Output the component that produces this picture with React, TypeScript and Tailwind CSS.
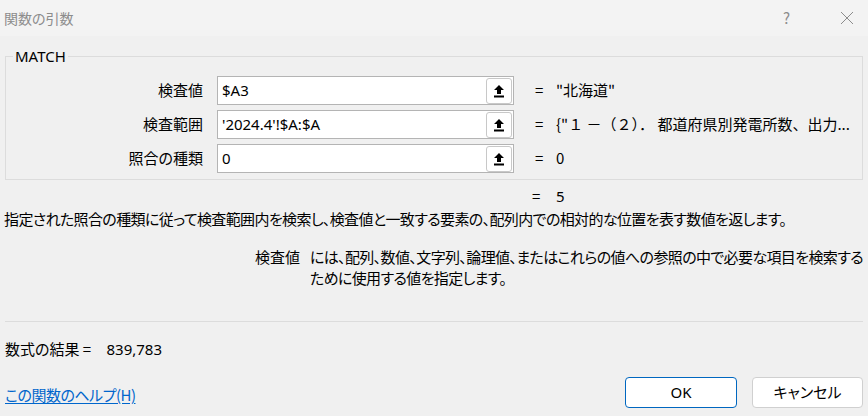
import React from "react";

const jp = { fontFamily: '"Noto Sans CJK JP", "Noto Sans", sans-serif' };
const palt = { fontFeatureSettings: '"palt"' } as React.CSSProperties;

function RefIcon() {
  return (
    <svg width="12" height="14" viewBox="0 0 12 14">
      <path d="M6 1 L11 6 L8 6 L8 10 L4 10 L4 6 L1 6 Z" fill="#000" />
      <rect x="1" y="11.5" width="10" height="2" fill="#000" />
    </svg>
  );
}

function Field({ value }: { value: string }) {
  return (
    <div className="h-[29px] w-[297px] bg-white border border-[#b4b4b4] flex items-center justify-between pl-[4px] pr-[1px]">
      <span className="text-[15px] text-black" style={{ fontFamily: '"Noto Sans", sans-serif' }}>{value}</span>
      <div className="h-[26px] w-[26px] rounded-[3px] border border-[#c8c8c8] bg-white flex items-center justify-center">
        <RefIcon />
      </div>
    </div>
  );
}

export default function App() {
  const rows = [
    { label: "検査値", value: "$A3", result: '"北海道"' },
    { label: "検査範囲", value: "'2024.4'!$A:$A", result: '{"１ －（２）． 都道府県別発電所数、出力...' },
    { label: "照合の種類", value: "0", result: "0" },
  ];
  return (
    <div className="w-[868px] h-[416px] bg-[#f0f0f0] flex flex-col text-black overflow-hidden" style={jp}>
      <div className="h-[36px] bg-[#f3f3f3] flex items-center pl-[4px] pr-[14px] text-[14px] text-[#8c8c8c]">
        <span style={palt}>関数の引数</span>
        <span className="ml-auto mr-[50px] text-[15px]">?</span>
        <svg width="14" height="14" viewBox="0 0 14 14">
          <path d="M1 1 L13 13 M13 1 L1 13" stroke="#8c8c8c" strokeWidth="1" />
        </svg>
      </div>
      <div className="px-[5px]">
        <fieldset className="mt-[9px] border border-[#dcdcdc] pl-[0px] pr-[0px] pb-[6px]">
          <legend className="ml-[7px] px-[2px] text-[15px] leading-[22px]" style={{ fontFamily: '"Noto Sans", sans-serif' }}>MATCH</legend>
          <div className="mt-[9px] flex flex-col gap-[5px]">
            {rows.map((r) => (
              <div key={r.label} className="flex items-center h-[29px]">
                <div className="w-[198px] text-right text-[15px] pr-[1px]" style={palt}>{r.label}</div>
                <div className="ml-[13px]"><Field value={r.value} /></div>
                <div className="ml-[21px] w-[14px] text-[15px]">=</div>
                <div className="ml-[7px] text-[15px] whitespace-nowrap">{r.result}</div>
              </div>
            ))}
          </div>
        </fieldset>
        <div className="flex items-center h-[20px] mt-[6px] text-[15px]">
          <span className="ml-[527px] w-[14px]">=</span>
          <span className="ml-[10px]" style={{ fontFamily: '"Noto Sans", sans-serif' }}>5</span>
        </div>
        <div className="mt-[3px] -ml-[1px] text-[15px] leading-[20px] whitespace-nowrap tracking-[-0.62px]" style={palt}>
          指定された照合の種類に従って検査範囲内を検索し、検査値と一致する要素の、配列内での相対的な位置を表す数値を返します。
        </div>
        <div className="mt-[17px] flex text-[15px] leading-[21px]" style={palt}>
          <div className="ml-[250px] w-[58px]">検査値</div>
          <div className="whitespace-nowrap tracking-[-0.62px]">
            には、配列、数値、文字列、論理値、またはこれらの値への参照の中で必要な項目を検索する
            <br />
            ために使用する値を指定します。
          </div>
        </div>
        <div className="mt-[33px] h-px bg-[#dcdcdc]" />
        <div className="mt-[17px] h-[20px] flex items-center text-[15px] whitespace-pre" style={palt}>
          <span>数式の結果 = </span>
          <span className="ml-[12px]" style={{ fontFamily: '"Noto Sans", sans-serif' }}>839,783</span>
        </div>
        <div className="mt-[10px] flex items-start">
          <a className="mt-[15px] text-[15px] text-[#0066cc] underline underline-offset-2 tracking-[-0.5px]" style={palt}>この関数のヘルプ(H)</a>
          <div className="ml-auto mt-[8px] flex gap-[15px]">
            <button className="w-[112px] h-[31px] rounded-[4px] border border-[#0067c0] bg-white text-[15px]" style={{ fontFamily: '"Noto Sans", sans-serif' }}>OK</button>
            <button className="w-[111px] h-[31px] rounded-[4px] border border-[#d0d0d0] bg-white text-[15px]" style={palt}>キャンセル</button>
          </div>
        </div>
      </div>
    </div>
  );
}
